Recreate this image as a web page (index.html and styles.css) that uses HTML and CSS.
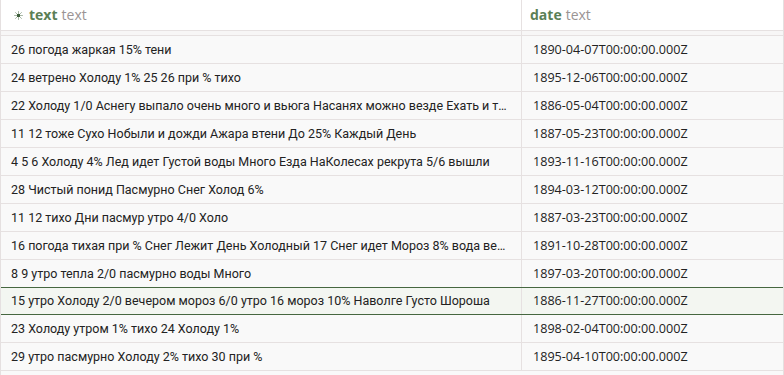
FILE: index.html
```html
<!DOCTYPE html>
<html>
<head>
<meta charset="utf-8">
<link rel="stylesheet" href="styles.css">
</head>
<body>
<div class="grid">
  <div class="row head">
    <div class="cell c1"><svg class="ico" width="9" height="9" viewBox="0 0 9 9"><g stroke="#a9b9a6" stroke-width="1" stroke-linecap="round"><line x1="4.5" y1="0.5" x2="4.5" y2="8.5"/><line x1="0.5" y1="4.5" x2="8.5" y2="4.5"/><line x1="1.5" y1="1.5" x2="7.5" y2="7.5"/><line x1="7.5" y1="1.5" x2="1.5" y2="7.5"/></g><rect x="3" y="3" width="3" height="3" fill="#3f5e3c"/></svg><b>text</b> <span class="type">text</span></div>
    <div class="cell c2"><b>date</b> <span class="type">text</span></div>
  </div>
  <div class="row band"><div class="cell c1"></div><div class="cell c2"></div></div>
  <div class="row"><div class="cell c1">26 погода жаркая 15% тени</div><div class="cell c2">1890-04-07T00:00:00.000Z</div></div>
  <div class="row"><div class="cell c1">24 ветрено Холоду 1% 25 26 при % тихо</div><div class="cell c2">1895-12-06T00:00:00.000Z</div></div>
  <div class="row"><div class="cell c1">22 Холоду 1/0 Аснегу выпало очень много и вьюга Насанях можно везде Ехать и так</div><div class="cell c2">1886-05-04T00:00:00.000Z</div></div>
  <div class="row"><div class="cell c1">11 12 тоже Сухо Нобыли и дожди Ажара втени До 25% Каждый День</div><div class="cell c2">1887-05-23T00:00:00.000Z</div></div>
  <div class="row"><div class="cell c1">4 5 6 Холоду 4% Лед идет Густой воды Много Езда НаКолесах рекрута 5/6 вышли</div><div class="cell c2">1893-11-16T00:00:00.000Z</div></div>
  <div class="row"><div class="cell c1">28 Чистый понид Пасмурно Снег Холод 6%</div><div class="cell c2">1894-03-12T00:00:00.000Z</div></div>
  <div class="row"><div class="cell c1">11 12 тихо Дни пасмур утро 4/0 Холо</div><div class="cell c2">1887-03-23T00:00:00.000Z</div></div>
  <div class="row"><div class="cell c1">16 погода тихая при % Снег Лежит День Холодный 17 Снег идет Мороз 8% вода вечером</div><div class="cell c2">1891-10-28T00:00:00.000Z</div></div>
  <div class="row"><div class="cell c1">8 9 утро тепла 2/0 пасмурно воды Много</div><div class="cell c2">1897-03-20T00:00:00.000Z</div></div>
  <div class="row sel"><div class="cell c1">15 утро Холоду 2/0 вечером мороз 6/0 утро 16 мороз 10% Наволге Густо Шороша</div><div class="cell c2">1886-11-27T00:00:00.000Z</div></div>
  <div class="row"><div class="cell c1">23 Холоду утром 1% тихо 24 Холоду 1%</div><div class="cell c2">1898-02-04T00:00:00.000Z</div></div>
  <div class="row"><div class="cell c1">29 утро пасмурно Холоду 2% тихо 30 при %</div><div class="cell c2">1895-04-10T00:00:00.000Z</div></div>
</div>
</body>
</html>
```
FILE: styles.css
```css
html, body {
  margin: 0;
  padding: 0;
  background: #ffffff;
  overflow: hidden;
}
.grid {
  width: 782px;
  height: 375px;
  border-left: 1px solid #e5e0e0;
  border-right: 1px solid #e5e0e0;
  background: #f9f9f9;
  font-family: Roboto, "Noto Sans", sans-serif;
  font-size: 12.5px;
  color: #222;
}
.row {
  display: flex;
  height: 27px;
  border-bottom: 1px solid #e6e1e1;
  background: #f9f9f9;
}
.cell {
  white-space: nowrap;
  overflow: hidden;
}
.c1 {
  width: 521px;
  flex: none;
  padding: 0 10px;
  box-sizing: border-box;
  border-right: 1px solid #e6e1e1;
  text-overflow: ellipsis;
  line-height: 27px;
}
.c2 {
  flex: 1;
  padding-left: 11px;
  font-family: "Open Sans", sans-serif;
  font-size: 12.6px;
  line-height: 27px;
}
.head {
  height: 30px;
  background: #ffffff;
}
.head .c1, .head .c2 {
  font-size: 14px;
  line-height: 28px;
  font-family: "Open Sans", sans-serif;
  display: flex;
  align-items: center;
}
.head .c2 { padding-left: 8px; }
.head b {
  color: #5b7f55;
  font-weight: 700;
}
.head .type {
  color: #9a9494;
  margin-left: 4px;
}
.head .c1 { padding-left: 13px; }
.ico { margin-right: 6px; margin-top: 1px; }
.band {
  height: 4px;
  background: #f7f6f6;
}
.band .c1, .band .c2 { line-height: 4px; }
.sel {
  background: #f3f6f1;
  border-top: 1px solid #466740;
  border-bottom: 1px solid #466740;
  height: 26px;
  margin-top: -1px;
}
.sel .c1, .sel .c2 { line-height: 26px; }
```
